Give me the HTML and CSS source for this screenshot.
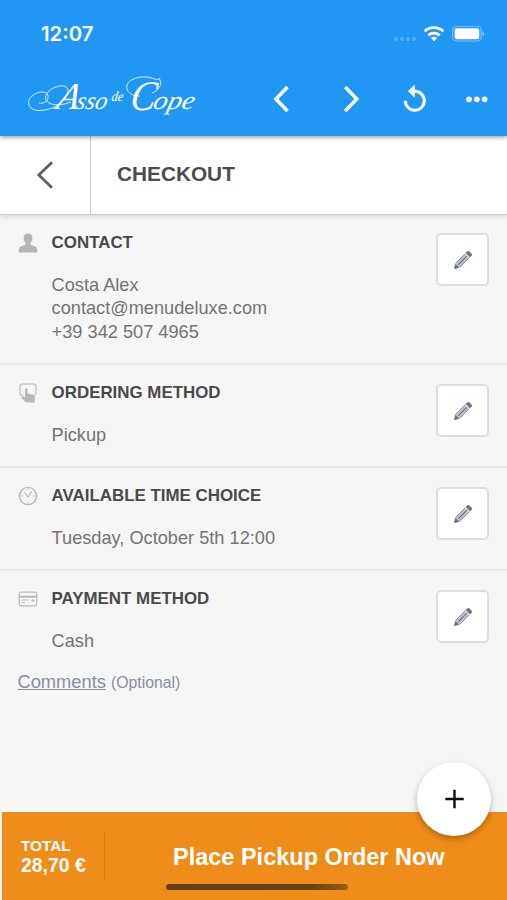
FILE: index.html
```html
<!DOCTYPE html>
<html lang="en">
<head>
<meta charset="utf-8">
<title>Checkout</title>
<link rel="stylesheet" href="styles.css">
</head>
<body>
<svg class="defs" width="0" height="0" aria-hidden="true">
  <symbol id="pencil" viewBox="0 0 20 20">
    <path d="M1 19l1.300-5.800L13.200 2.300l4.500 4.500L6.800 17.700z" fill="#c3c6d0"/>
    <path d="M1 19l1.300-5.300 4 4z" fill="#6a7478"/>
    <path d="M12.800 2.800L14.400 1.200q.9-.6 1.800.1l2.500 2.500q.7.900.1 1.800l-1.600 1.600z" fill="#6c747e"/>
    <path d="M2.900 13.200l9-9M6.800 17.100l9-9" stroke="#868c99" stroke-width="1"/>
    <path d="M5.300 14.700l8.500-8.500" stroke="#747b8a" stroke-width="1.300"/>
    <path d="M11.800 3.400l4.800 4.800" stroke="#f0f1f3" stroke-width=".8"/>
  </symbol>
</svg>
<div class="screen">
  <header class="appbar">
    <div class="status">
      <span class="time">12:07</span>
      <svg class="indicators" width="92" height="18" viewBox="0 0 92 18">
        <g fill="#5db0f6"><circle cx="4" cy="11" r="1.900"/><circle cx="10" cy="11" r="1.900"/><circle cx="16" cy="11" r="1.900"/><circle cx="22" cy="11" r="1.900"/></g>
        <g fill="none" stroke="#fff" stroke-width="2.900"><path d="M32.600 3.300a14 14 0 0 1 18.800 0"/><path d="M36.300 7.300a8.700 8.700 0 0 1 11.400 0"/></g>
        <path d="M38.800 10a5 5 0 0 1 6.400 0L42 13.200z" fill="#fff"/>
        <rect x="60.700" y="-1.500" width="28.500" height="14.500" rx="4" fill="none" stroke="#7cc0f9" stroke-width="1.200"/>
        <rect x="62.600" y=".3" width="24.700" height="10.900" rx="2.300" fill="#fff"/>
        <path d="M90.400 3.200q1.900.8 1.900 2.500t-1.900 2.500z" fill="#7cc0f9"/>
      </svg>
    </div>
    <div class="toolbar">
      <svg class="logo" width="172" height="46" viewBox="0 0 172 46">
        <g fill="none" stroke="#e4f3ff" stroke-width=".9">
          <path d="M31 28C24 34 8 37 3 32S1 20 9 17s12 1 11 5-5 6-9 5"/>
          <path d="M43 26C33 30 21 30 18 24s6-13 14-14 9 4 7 9-6 8-9 10"/>
          <path d="M112 20c-8 1-15-5-13-11 2-7 17-10 24-7 6 2 9 2 9-.5"/>
          <path d="M124 17c8-3 12-12 6-14"/>
        </g>
        <g class="script">
          <text transform="translate(27 33) skewX(-16)" font-size="38" textLength="22" lengthAdjust="spacingAndGlyphs">A</text>
          <text transform="translate(47 33) skewX(-14)" font-size="25" textLength="31" lengthAdjust="spacingAndGlyphs">sso</text>
          <text transform="translate(83 25) skewX(-8)" font-size="14" textLength="12" lengthAdjust="spacingAndGlyphs">de</text>
          <text transform="translate(101 33.500) skewX(-10)" font-size="42" textLength="25" lengthAdjust="spacingAndGlyphs">C</text>
          <text transform="translate(124 33) skewX(-14)" font-size="26" textLength="41" lengthAdjust="spacingAndGlyphs">ope</text>
        </g>
      </svg>
      <svg class="tools" width="222" height="40" viewBox="0 0 222 40">
        <g fill="none" stroke="#fff" stroke-width="3.500">
          <path d="M21.500 8L9.900 20l11.600 12"/>
          <path d="M79.200 8l11.600 12-11.600 12"/>
          <path d="M139.300 21.800a9.500 9.500 0 1 0 9.500-9.500" stroke-width="3"/>
        </g>
        <path d="M148.800 5.600v13.200l-6.900-6.600z" fill="#fff"/>
        <g fill="#fff"><circle cx="203" cy="20.300" r="2.900"/><circle cx="210.800" cy="20.300" r="2.900"/><circle cx="218.600" cy="20.300" r="2.900"/></g>
      </svg>
    </div>
  </header>

  <nav class="titlebar">
    <div class="back"><svg width="18" height="28" viewBox="0 0 18 28"><path d="M17 1.200L3.800 14 17 26.800" fill="none" stroke="#606060" stroke-width="2.800"/></svg></div>
    <h1>CHECKOUT</h1>
  </nav>

  <main>
    <section class="contact">
      <svg class="icon" width="20" height="20" viewBox="0 0 20 20"><path d="M10 .5c3 0 4.600 1.800 4.400 4.600-.2 2.300-1 3.800-2 4.700v1.700l4.800 2q2 .9 2 2.700v3.300H.8v-3.300q0-1.800 2-2.700l4.800-2V9.800c-1-.9-1.800-2.400-2-4.700C5.400 2.300 7 .5 10 .5z" fill="#b5b5b5"/></svg>
      <div class="info"><h2>CONTACT</h2><p>Costa Alex<br>contact@menudeluxe.com<br>+39 342 507 4965</p></div>
      <div class="edit"><svg width="20" height="20"><use href="#pencil"/></svg></div>
    </section>
    <section class="method">
      <svg class="icon" width="20" height="20" viewBox="0 0 20 20"><path d="M5 12.500H4.500q-2.500 0-2.500-2.500V3.500Q2 1 4.500 1h11Q18 1 18 3.500V10q0 1.500-1 2" fill="none" stroke="#c8c8c8" stroke-width="1.500"/><path d="M7 6.500Q7 5 8.200 5t1.300 1.500v4l6.200 1.200q1.600.4 1.400 2.200l-.6 5.600H7.800L3.500 14.800q-.7-1.300.8-1.500L7 14.200z" fill="#b8b8b8"/></svg>
      <div class="info"><h2>ORDERING METHOD</h2><p>Pickup</p></div>
      <div class="edit"><svg width="20" height="20"><use href="#pencil"/></svg></div>
    </section>
    <section class="when">
      <svg class="icon" width="20" height="20" viewBox="0 0 20 20"><g fill="none" stroke="#b8b8b8"><circle cx="10" cy="10" r="8.600" stroke-width="1.400"/><path d="M6.500 6.500L9.900 11l3.800-5.500" stroke-width="1.200"/><path d="M10 2.500v2M10 15.500v2M2.500 10h2M15.500 10h2" stroke-width=".9"/></g></svg>
      <div class="info"><h2>AVAILABLE TIME CHOICE</h2><p>Tuesday, October 5th 12:00</p></div>
      <div class="edit"><svg width="20" height="20"><use href="#pencil"/></svg></div>
    </section>
    <section class="payment">
      <svg class="icon" width="20" height="20" viewBox="0 0 20 20"><g fill="none" stroke="#b8b8b8"><rect x="1.200" y="3.200" width="17.600" height="13.600" rx="2" stroke-width="1.200"/><path d="M1 7.700h18" stroke-width="2"/><path d="M3.500 11h7M3.500 13.300h3.500" stroke-width="1"/><path d="M13.500 11.500h3" stroke-width="2"/></g></svg>
      <div class="info"><h2>PAYMENT METHOD</h2><p>Cash</p></div>
      <div class="edit"><svg width="20" height="20"><use href="#pencil"/></svg></div>
    </section>
    <div class="comments"><a>Comments</a> <small>(Optional)</small></div>
  </main>

  <footer class="order">
    <div class="total"><span class="label">TOTAL</span><span class="amount">28,70 €</span></div>
    <div class="place">Place Pickup Order Now</div>
    <div class="home"></div>
    <div class="fab"><svg width="20" height="20" viewBox="0 0 20 20"><path d="M10.500 .8v18.400M1.300 10h18.400" stroke="#111" stroke-width="2.400"/></svg></div>
  </footer>
</div>
</body>
</html>
```
FILE: styles.css
```css
* { box-sizing: border-box; }
body { margin: 0; font-family: "Liberation Sans", Arial, sans-serif; color: #6b6b6b; }
h1, h2, p { margin: 0; }
svg { display: block; overflow: visible; flex: none; }
.defs { position: absolute; }
.screen { width: 507px; height: 900px; overflow: hidden; display: flex; flex-direction: column; background: #f6f6f6; }

.appbar { height: 136px; flex: none; background: #2196f3; box-shadow: 0 1px 5px rgba(0,0,0,.45); position: relative; z-index: 2; }
.status { height: 68px; display: flex; justify-content: space-between; padding: 22px 23px 0 41px; color: #fff; }
.time { font: 600 20.3px/24px Inter, sans-serif; }
.indicators { margin-top: 6px; }
.toolbar { display: flex; justify-content: space-between; padding: 8px 19px 0 28px; }
.script text { fill: #fff; font-family: "Liberation Serif", serif; font-style: italic; }
.tools { margin-top: 3px; }

.titlebar { height: 79px; flex: none; display: flex; background: #fff; border-bottom: 1px solid #ccc; box-shadow: 0 1px 5px rgba(0,0,0,.18); position: relative; z-index: 1; }
.back { width: 91px; border-right: 1px solid #ccc; display: flex; align-items: center; padding-left: 35px; }
h1 { font-size: 20.8px; line-height: 76px; padding-left: 26px; color: #4c4c4c; }

main { flex: 1; }
section { display: flex; padding: 16px 18px 0; height: 103px; border-bottom: 2px solid #eaeaea; }
.contact { height: 150px; padding-top: 18px; }
.payment { height: 100px; border: 0; }
.icon { margin: 2px 14px 0 0; }
.contact .icon { margin-top: 0; }
.info { flex: 1; margin-left: -.4px; }
h2 { font-size: 16.9px; line-height: 20px; color: #4a4a4a; margin-top: 2px; white-space: nowrap; }
.contact h2 { margin-top: 0; }
p { font-size: 18.2px; line-height: 23.5px; margin-top: 20.500px; color: #747474; }
.edit { width: 53px; height: 53px; margin-top: 3px; background: #fff; border: 2px solid #dcdfe0; border-radius: 5px; display: flex; align-items: center; justify-content: center; }
.contact .edit { margin-top: 0; }
.comments { padding: 0 17.500px; color: #8790a0; font-size: 18.300px; line-height: 22px; }
.comments a { text-decoration: underline; }
.comments small { font-size: 15.800px; }

.order { position: relative; height: 88px; flex: none; margin-left: 2px; padding-left: 19px; display: flex; background: #ef8d1a; color: #fff; font-weight: bold; }
.total { width: 84px; height: 47px; margin-top: 21px; padding-top: 4px; border-right: 1px solid #d9800f; display: flex; flex-direction: column; }
.label { font-size: 15.300px; line-height: 18px; }
.amount { font-size: 19.400px; line-height: 21px; }
.place { padding: 31px 0 0 68px; font-size: 23.500px; line-height: 28px; white-space: nowrap; }
.home { position: absolute; left: 164px; top: 72px; width: 182px; height: 6px; border-radius: 3px; background: linear-gradient(90deg, #6a3f10, #6a420f 80%, #95600f); }
.fab { position: absolute; left: 415px; top: -50px; width: 74px; height: 74px; border-radius: 50%; background: #fff; box-shadow: 0 3px 6px rgba(0,0,0,.28); display: flex; align-items: center; justify-content: center; }
```
